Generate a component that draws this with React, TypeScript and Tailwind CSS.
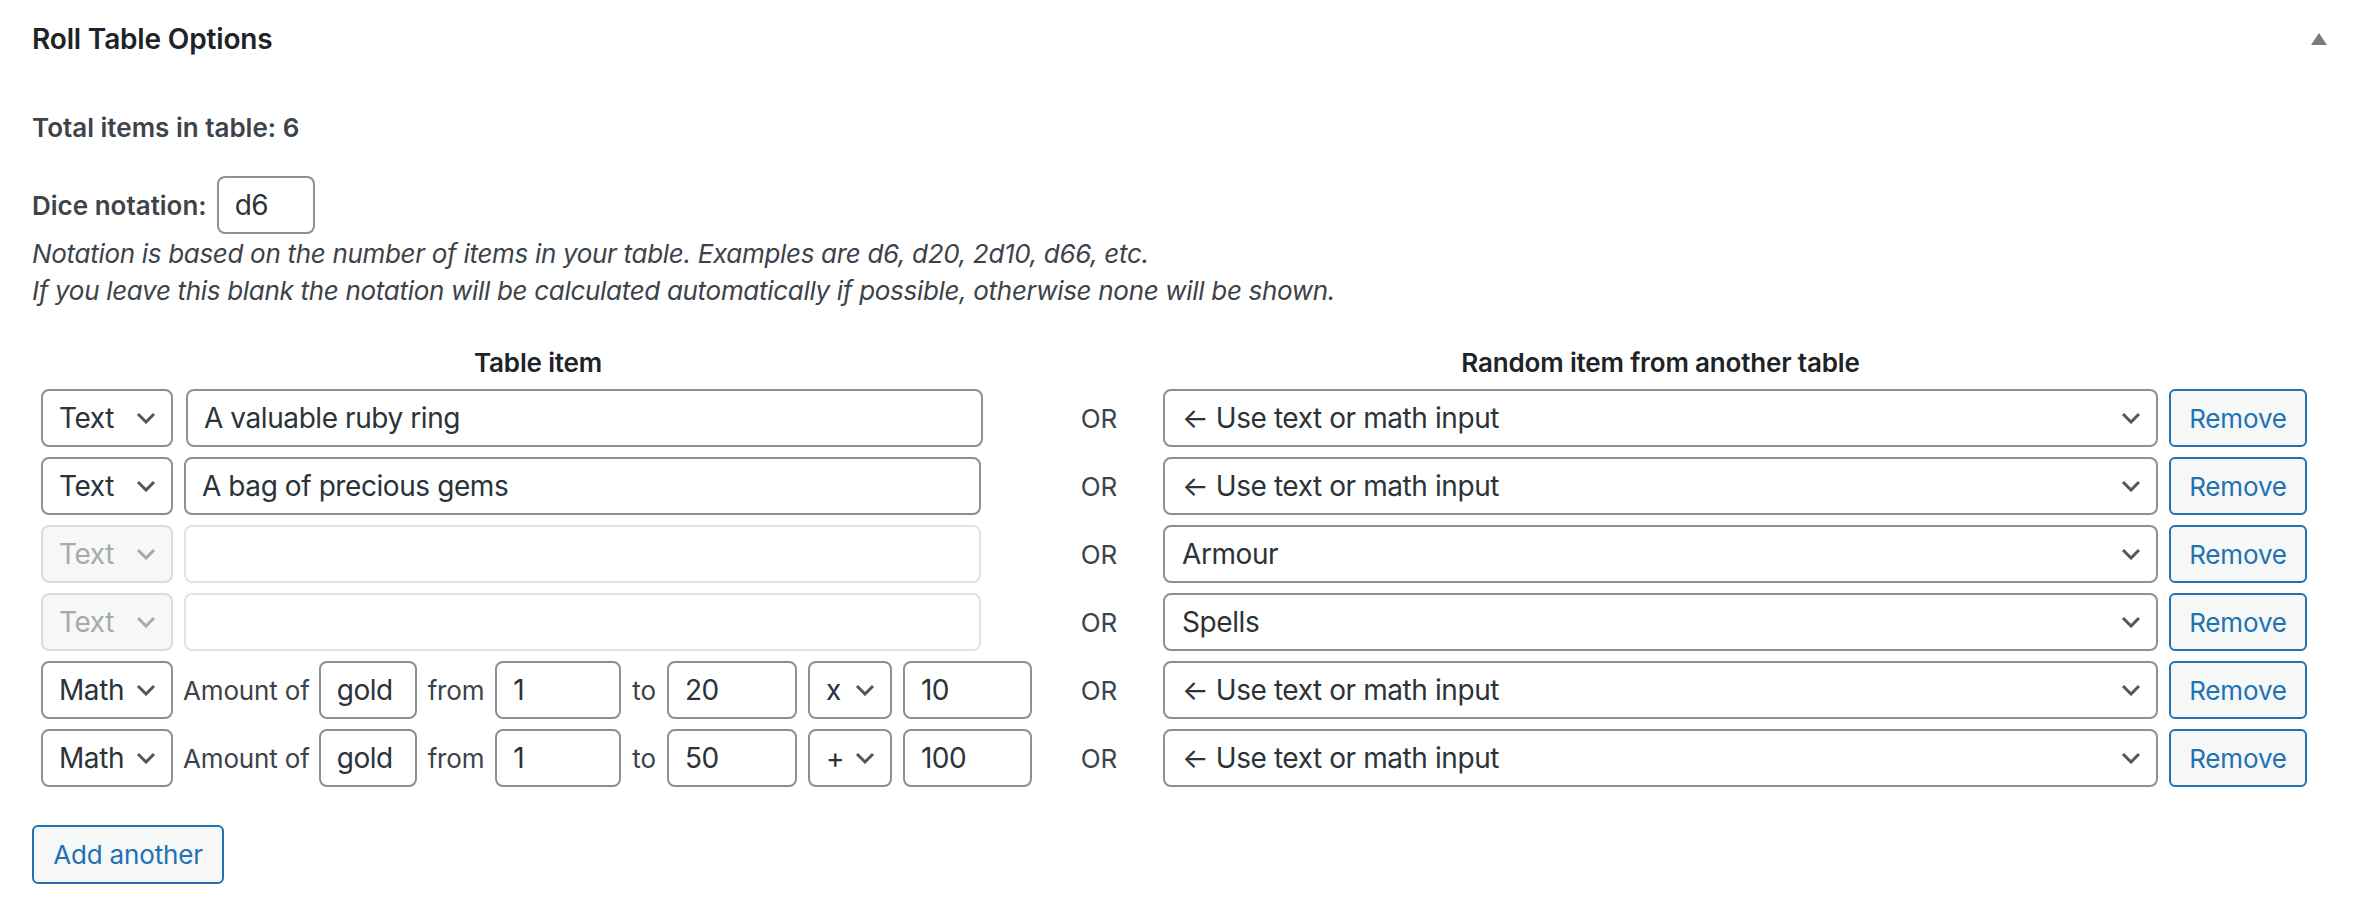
import React from "react";

type Row = {
  kind: "text" | "math";
  value?: string;
  disabled?: boolean;
  from?: string;
  to?: string;
  op?: string;
  amount?: string;
  random: string;
};

const USE_INPUT = "← Use text or math input";

const rows: Row[] = [
  { kind: "text", value: "A valuable ruby ring", random: USE_INPUT },
  { kind: "text", value: "A bag of precious gems", random: USE_INPUT },
  { kind: "text", disabled: true, random: "Armour" },
  { kind: "text", disabled: true, random: "Spells" },
  { kind: "math", from: "1", to: "20", op: "x", amount: "10", random: USE_INPUT },
  { kind: "math", from: "1", to: "50", op: "+", amount: "100", random: USE_INPUT },
];

const inputCls =
  "h-[58px] shrink-0 rounded-[8px] border-2 border-[#8c8f94] bg-white px-[16px] text-[28px] tracking-[-0.015em] text-[#2c3338] outline-none";

const Chevron = ({ muted }: { muted?: boolean }) => (
  <svg width="20" height="12" viewBox="0 0 20 12" className="shrink-0">
    <path
      d="M2 2 L10 10 L18 2"
      fill="none"
      stroke={muted ? "#a7aaad" : "#50575e"}
      strokeWidth="3"
    />
  </svg>
);

const FakeSelect = ({
  label,
  width,
  disabled,
}: {
  label: string;
  width: string;
  disabled?: boolean;
}) => (
  <div
    className={`flex h-[58px] shrink-0 items-center justify-between rounded-[8px] border-2 pl-[16px] pr-[15px] text-[28px] tracking-[-0.015em] ${width} ${
      disabled
        ? "border-[#dcdcde] bg-[#f6f7f7] text-[#a7aaad]"
        : "border-[#8c8f94] bg-white text-[#2c3338]"
    }`}
  >
    <span>{label}</span>
    <Chevron muted={disabled} />
  </div>
);

const ItemCell = ({ row, idx }: { row: Row; idx: number }) => {
  if (row.kind === "math") {
    return (
      <div className="flex items-center gap-[11px] whitespace-nowrap text-[26px] text-[#3c434a]">
        <FakeSelect label="Math" width="w-[132px]" />
        <span className="-ml-[1px] -mr-[2px]">Amount of</span>
        <input readOnly value="gold" className={`${inputCls} w-[98px]`} />
        <span>from</span>
        <input readOnly value={row.from} className={`${inputCls} w-[126px]`} />
        <span>to</span>
        <input readOnly value={row.to} className={`${inputCls} w-[130px]`} />
        <FakeSelect label={row.op ?? ""} width="w-[84px]" />
        <input readOnly value={row.amount} className={`${inputCls} w-[129px]`} />
      </div>
    );
  }
  return (
    <div className="flex items-center">
      <FakeSelect label="Text" width="w-[132px]" disabled={row.disabled} />
      {row.disabled ? (
        <input
          disabled
          className="ml-[11px] h-[58px] w-[797px] rounded-[8px] border-2 border-[#e2e3e5] bg-white px-[16px] text-[28px] outline-none"
        />
      ) : (
        <input
          readOnly
          value={row.value}
          className={`${inputCls} w-[797px] ${idx === 0 ? "ml-[13px]" : "ml-[11px]"}`}
        />
      )}
    </div>
  );
};

export default function App() {
  return (
    <div className="min-h-screen w-full bg-white font-['Inter',sans-serif] tracking-[-0.01em] text-[#3c434a]">
      {/* header */}
      <div className="flex h-[78px] items-center justify-between pl-[32px] pr-[31px]">
        <h2 className="text-[28px] font-semibold text-[#1d2327]">Roll Table Options</h2>
        <svg width="16" height="12" viewBox="0 0 16 12">
          <polygon points="8,0 16,12 0,12" fill="#787c82" />
        </svg>
      </div>

      <div className="px-[32px]">
        <p className="mt-[31px] text-[26px] font-semibold leading-[37px] tracking-normal text-[#3c434a]">
          Total items in table: 6
        </p>

        <div className="mt-[30px] flex items-center gap-[10px]">
          <label className="text-[26px] font-semibold tracking-normal text-[#3c434a]">Dice notation:</label>
          <input readOnly value="d6" className={`${inputCls} w-[98px]`} />
        </div>
        <div className="mt-[1px] text-[26px] italic leading-[37px] tracking-[-0.012em] text-[#3c434a]">
          <p>Notation is based on the number of items in your table. Examples are d6, d20, 2d10, d66, etc.</p>
          <p>If you leave this blank the notation will be calculated automatically if possible, otherwise none will be shown.</p>
        </div>

        {/* table */}
        <div className="ml-[9px] mt-[35px]">
          <div className="grid grid-cols-[994px_128px_995px_149px] text-[26px] font-semibold leading-[37px] text-[#1d2327]">
            <div className="text-center">Table item</div>
            <div />
            <div className="text-center">Random item from another table</div>
            <div />
          </div>
          <div className="mt-[8px] flex flex-col gap-[10px]">
            {rows.map((row, i) => (
              <div key={i} className="grid grid-cols-[994px_128px_995px_149px] items-center">
                <ItemCell row={row} idx={i} />
                <div className="text-center text-[26px] text-[#3c434a]">OR</div>
                <div className="flex h-[58px] items-center justify-between rounded-[8px] border-2 border-[#8c8f94] bg-white pl-[17px] pr-[15px] text-[28px] tracking-[-0.015em] text-[#2c3338]">
                  <span>{row.random}</span>
                  <Chevron />
                </div>
                <div className="pl-[11px]">
                  <button className="h-[58px] w-[138px] rounded-[6px] border-2 border-[#2271b1] bg-[#f6f7f7] text-[26px] text-[#2271b1]">
                    Remove
                  </button>
                </div>
              </div>
            ))}
          </div>
        </div>

        <button className="mt-[38px] h-[59px] w-[192px] rounded-[6px] border-2 border-[#2271b1] bg-[#f6f7f7] text-[26px] text-[#2271b1]">
          Add another
        </button>
      </div>
    </div>
  );
}
